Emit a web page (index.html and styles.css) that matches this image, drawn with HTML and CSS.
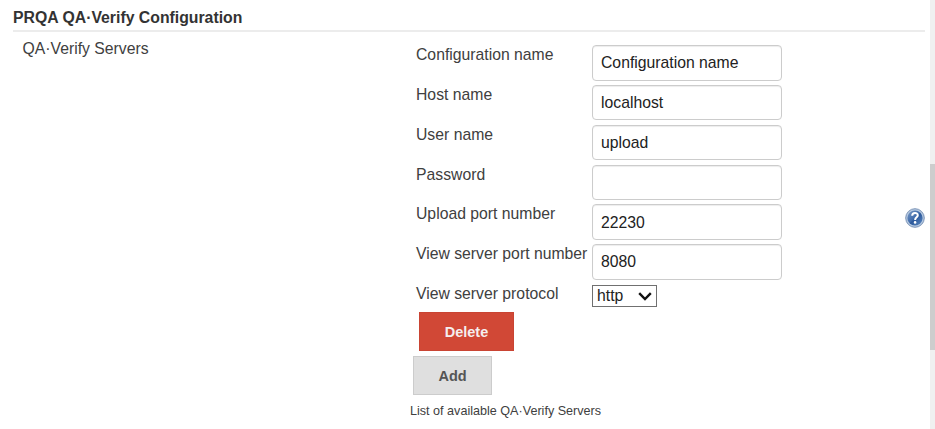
FILE: index.html
```html
<!DOCTYPE html>
<html lang="en">
<head>
<meta charset="utf-8">
<title>PRQA QA·Verify Configuration</title>
<link rel="stylesheet" href="styles.css">
</head>
<body>
<div class="page">
  <main class="content">
    <h1 class="section-title"><span>PRQA QA·Verify Configuration</span></h1>
    <div class="section-body">
      <div class="section-label"><span>QA·Verify Servers</span></div>
      <form class="settings">
        <div class="row"><label for="config">Configuration name</label><input id="config" type="text" value="Configuration name"></div>
        <div class="row"><label for="host">Host name</label><input id="host" type="text" value="localhost"></div>
        <div class="row"><label for="user">User name</label><input id="user" type="text" value="upload"></div>
        <div class="row"><label for="password">Password</label><input id="password" type="password"></div>
        <div class="row"><label for="upload">Upload port number</label><input id="upload" type="text" value="22230"></div>
        <div class="row"><label for="view">View server port number</label><input id="view" type="text" value="8080"></div>
        <div class="row row-select"><label>View server protocol</label>
          <div class="select"><span>http</span><svg width="14" height="9" viewBox="0 0 14 9"><path d="M1.2 1.2L7 7L12.8 1.2" fill="none" stroke="#111" stroke-width="2.4"/></svg></div>
        </div>
        <button type="button" class="button delete">Delete</button>
        <button type="button" class="button add">Add</button>
        <p class="note">List of available QA·Verify Servers</p>
      </form>
      <svg class="help" width="20" height="20" viewBox="0 0 20 20">
        <defs><linearGradient id="ball" x1="0" y1="0" x2="1" y2="1"><stop offset="0" stop-color="#7898c4"/><stop offset=".48" stop-color="#3f6bab"/><stop offset=".52" stop-color="#2b589b"/><stop offset="1" stop-color="#5c8ac2"/></linearGradient></defs>
        <circle cx="10" cy="10" r="9.3" fill="#b4c7df" stroke="#7c95b8" stroke-width="1"/>
        <circle cx="10" cy="10" r="7.6" fill="url(#ball)"/>
        <path d="M7.2 7.8C7.2 4.2 12.8 4.2 12.8 7.3C12.8 9.3 10.1 9.4 10.1 11.9" fill="none" stroke="#fff" stroke-width="2"/>
        <circle cx="10.1" cy="14.4" r="1.3" fill="#fff"/>
      </svg>
    </div>
  </main>
  <div class="scrollbar"><div class="thumb"></div></div>
</div>
</body>
</html>
```
FILE: styles.css
```css
* { box-sizing: border-box; }
body {
  margin: 0;
  background: #fff;
  color: #404040;
  font: 15.75px/20px "Liberation Sans", Arial, sans-serif;
  overflow: hidden;
}
.page { display: flex; height: 429px; }
.content { width: 930px; padding: 0 5px 0 13px; }
.section-title {
  height: 32px;
  margin: 0;
  padding-top: 8px;
  border-bottom: 2px solid #ececec;
  color: #333;
  font-size: 15.8px;
  line-height: 20px;
}
.section-body { display: flex; }
.section-label { width: 403px; padding: 7px 0 0 9.5px; }
.settings { width: 489px; padding-top: 13px; }
.row { display: flex; height: 39.85px; }
.row label { width: 176px; white-space: nowrap; }
.row input {
  width: 190px;
  height: 35.5px;
  padding: 1px 8px 0;
  border: 1.5px solid #ccc;
  border-radius: 4px;
  outline: 0;
  background: #fff;
  box-shadow: inset 0 1px 1px rgba(0, 0, 0, .075);
  color: #222;
  font: inherit;
}
.row-select { height: 28px; }
.select {
  display: flex;
  align-items: center;
  justify-content: space-between;
  width: 65px;
  height: 22px;
  margin-top: 1px;
  padding: 0 4px;
  border: 1px solid #707070;
  color: #222;
}
.button {
  display: block;
  height: 39px;
  padding: 0;
  font: bold 14.5px/20px "Liberation Sans", Arial, sans-serif;
}
.delete {
  width: 95px;
  margin-left: 3px;
  border: 1px solid #c94433;
  background: #d14836;
  color: #f5eeee;
}
.add {
  width: 79px;
  margin: 5px 0 0 -3px;
  padding-top: 1px;
  border: 1px solid #ccc;
  background: #dfdfdf;
  color: #555;
}
.note {
  margin: 6px 0 0 -6px;
  font-size: 12.6px;
  line-height: 20px;
}
.help { flex: none; margin: 176px 0 0 0; }
.scrollbar { width: 5px; padding-top: 164px; background: #f0f0f0; }
.thumb { height: 186px; background: #cdcdcd; }
```
